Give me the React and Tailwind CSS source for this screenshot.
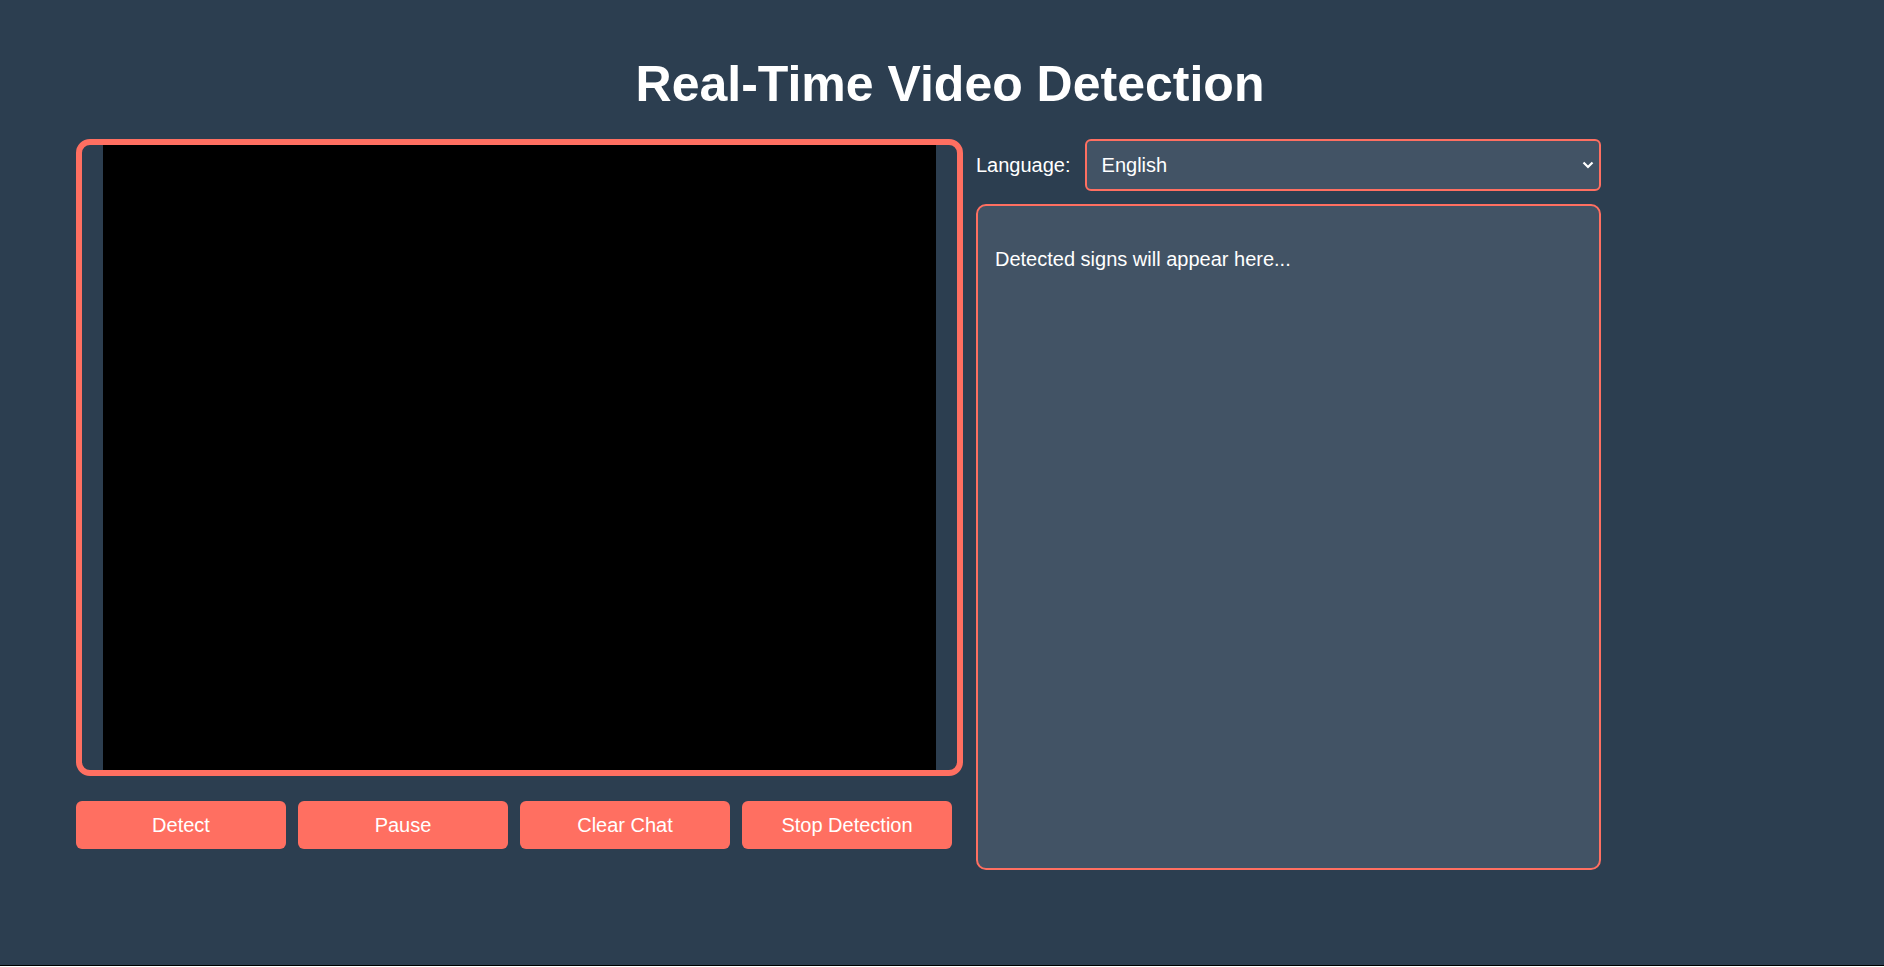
export default function App() {
  return (
    <div className="min-h-[966px] border-b border-black bg-[#2c3e50] font-['Liberation_Sans',Arial,sans-serif] text-white">
      <h1 className="pl-4 pt-[56px] text-center text-[50px] font-bold leading-[57px]">
        Real-Time Video Detection
      </h1>

      <div className="mt-[26px] flex gap-[13px] pl-[76px]">
        <div className="w-[887px]">
          <div className="rounded-[14px] border-[6px] border-[#ff6f61]">
            <div className="mx-auto h-[625px] w-[833px] bg-black" />
          </div>
          <div className="mt-[25px] flex gap-3">
            <button className="h-12 w-[210px] rounded-md bg-[#ff6f61] text-[20px] text-white">
              Detect
            </button>
            <button className="h-12 w-[210px] rounded-md bg-[#ff6f61] text-[20px] text-white">
              Pause
            </button>
            <button className="h-12 w-[210px] rounded-md bg-[#ff6f61] text-[20px] text-white">
              Clear Chat
            </button>
            <button className="h-12 w-[210px] rounded-md bg-[#ff6f61] text-[20px] text-white">
              Stop Detection
            </button>
          </div>
        </div>

        <div className="w-[625px]">
          <div className="flex items-center gap-[14px]">
            <label className="text-[20px]">Language:</label>
            <div className="relative flex-1">
              <select className="h-[52px] w-full appearance-none rounded-md border-2 border-[#ff6f61] bg-[#425365] pl-[15px] text-[20px] text-white outline-none">
                <option>English</option>
              </select>
              <svg
                className="pointer-events-none absolute right-[7px] top-[22px]"
                width="12"
                height="8"
                viewBox="0 0 12 8"
                fill="none"
                stroke="white"
                strokeWidth="2.2"
              >
                <path d="M1.5 1.5 6 6l4.5-4.5" />
              </svg>
            </div>
          </div>

          <div className="mt-[13px] h-[666px] rounded-[10px] border-2 border-[#ff6f61] bg-[#425365] px-[17px] pt-[18px]">
            <p className="my-5 text-[20px]">Detected signs will appear here...</p>
          </div>
        </div>
      </div>
    </div>
  );
}
